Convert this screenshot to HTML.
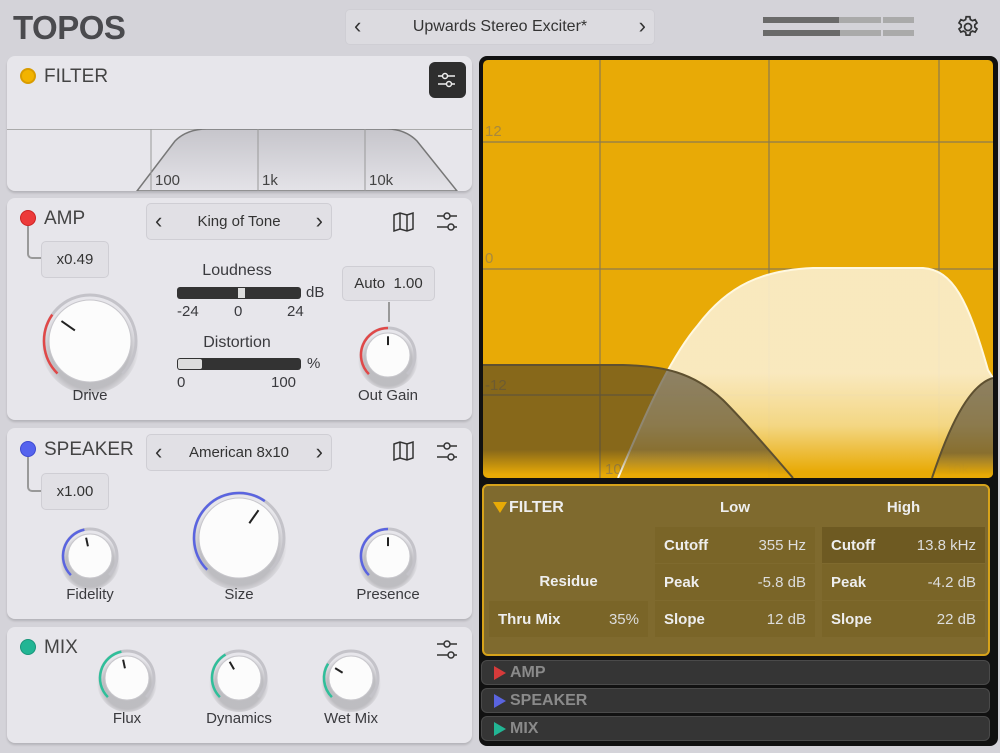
<!DOCTYPE html>
<html><head><meta charset="utf-8"><style>
*{margin:0;padding:0;box-sizing:border-box}
body{width:1000px;height:753px;background:#d4d3d9;font-family:"Liberation Sans",sans-serif;position:relative;overflow:hidden;color:#333}
.a{position:absolute}
.panel{position:absolute;left:7px;width:465px;background:#e7e6eb;border-radius:8px;box-shadow:0 2px 2px rgba(0,0,0,.15)}
.lbl{position:absolute;font-size:15px;color:#3a3a3e;text-align:center}
.box{position:absolute;background:#e1e0e5;border:1px solid #cfced4;border-radius:5px;font-size:15px;text-align:center;color:#333}
.title{position:absolute;font-size:19px;color:#444}
.dot{position:absolute;width:16px;height:16px;border-radius:50%}
.bar{position:absolute;left:481px;width:509px;height:25px;background:#353535;border:1px solid #4a4a4a;border-radius:6px;font-weight:bold;font-size:16px;color:#8a8a8a;padding:3px 0 0 28px}
.tri{position:absolute;left:12px;top:5px;width:0;height:0;border-top:7px solid transparent;border-bottom:7px solid transparent;border-left:12px solid}
.cell{position:absolute;height:36px;background:#7a6528;font-weight:bold;font-size:15px;color:#eee;padding:10px 0 0 9px}
.cell span{position:absolute;right:9px;top:10px;font-weight:normal;color:#ddd}
.ar{position:absolute;top:4px;font-size:22px;line-height:22px}
</style></head><body>
<div class="a" style="left:13px;top:9px;font-size:33px;font-weight:bold;color:#4a4a4e;letter-spacing:-0.5px">TOPOS</div>
<div class="box" style="left:345px;top:9px;width:310px;height:36px;font-size:16px;padding-top:8px;background:#dcdbe0">Upwards Stereo Exciter*<span class="ar" style="left:8px;top:5px">&lsaquo;</span><span class="ar" style="right:8px;top:5px">&rsaquo;</span></div>
<div class="a" style="left:763px;top:17px;width:76px;height:6px;background:#6a6a6a"></div><div class="a" style="left:839px;top:17px;width:42px;height:6px;background:#aaa"></div><div class="a" style="left:883px;top:17px;width:31px;height:6px;background:#aaa"></div>
<div class="a" style="left:763px;top:30px;width:77px;height:6px;background:#6a6a6a"></div><div class="a" style="left:840px;top:30px;width:41px;height:6px;background:#aaa"></div><div class="a" style="left:883px;top:30px;width:31px;height:6px;background:#aaa"></div>
<svg class="a" style="left:955px;top:14px" width="26" height="26" viewBox="0 0 24 24" fill="none" stroke="#333" stroke-width="1.6"><path d="M10.3 2.5h3.4l.5 2.6 1.9 1.1 2.5-.9 1.7 2.9-2 1.7v2.2l2 1.7-1.7 2.9-2.5-.9-1.9 1.1-.5 2.6h-3.4l-.5-2.6-1.9-1.1-2.5.9-1.7-2.9 2-1.7v-2.2l-2-1.7 1.7-2.9 2.5.9 1.9-1.1z"/><circle cx="12" cy="12" r="3.2"/></svg>

<div class="panel" style="top:56px;height:135px;overflow:hidden">
 <div class="dot" style="left:13px;top:12px;background:#f2b300;border:2px solid #d99c00"></div>
 <div class="title" style="left:37px;top:10px">FILTER</div>
 <div class="a" style="left:422px;top:6px;width:37px;height:36px;background:#2e2e2e;border-radius:6px"></div>
 <svg class="a" style="left:428px;top:12px" width="24" height="24" viewBox="0 0 24 24" stroke="#eee" stroke-width="1.5" fill="none"><path d="M3 8h17M3 16h17"/><circle cx="10" cy="8" r="2.5" fill="#2e2e2e"/><circle cx="14" cy="16" r="2.5" fill="#2e2e2e"/></svg>
 <div class="a" style="left:0;top:73px;width:465px;height:1px;background:#aaa"></div>
 <svg class="a" style="left:0;top:73px" width="465" height="62"><defs><linearGradient id="fg" x1="0" y1="0" x2="0" y2="1"><stop offset="0" stop-color="#c6c5cb"/><stop offset="1" stop-color="#e4e3e8"/></linearGradient></defs>
 <path d="M130 62 L168 12 Q180 0 200 0 L380 0 Q398 0 410 12 L450 62Z" fill="url(#fg)" stroke="#777" stroke-width="1.5"/>
 <line x1="144" y1="0" x2="144" y2="62" stroke="#999"/><line x1="251" y1="0" x2="251" y2="62" stroke="#999"/><line x1="358" y1="0" x2="358" y2="62" stroke="#999"/>
 <text x="148" y="56" font-size="15" fill="#444" font-family="Liberation Sans">100</text><text x="255" y="56" font-size="15" fill="#444" font-family="Liberation Sans">1k</text><text x="362" y="56" font-size="15" fill="#444" font-family="Liberation Sans">10k</text></svg>
</div>

<div class="panel" style="top:198px;height:222px">
 <div class="dot" style="left:13px;top:12px;background:#ec3a3a;border:1px solid #c22"></div>
 <div class="title" style="left:37px;top:10px">AMP</div>
 <div class="a" style="left:20px;top:28px;width:14px;height:33px;border-left:2px solid #999;border-bottom:2px solid #999;border-bottom-left-radius:5px"></div>
 <div class="box" style="left:34px;top:43px;width:68px;height:37px;padding-top:9px">x0.49</div>
 <div class="box" style="left:139px;top:5px;width:186px;height:37px;padding-top:9px">King of Tone<span class="ar" style="left:8px;top:6px">&lsaquo;</span><span class="ar" style="right:8px;top:6px">&rsaquo;</span></div>
 <div class="lbl" style="left:180px;top:64px;width:100px;font-size:16px">Loudness</div>
 <div class="a" style="left:170px;top:89px;width:124px;height:12px;background:#333;border-radius:3px"></div>
 <div class="a" style="left:231px;top:90px;width:7px;height:10px;background:#ddd"></div>
 <div class="lbl" style="left:299px;top:86px">dB</div>
 <div class="lbl" style="left:170px;top:105px">-24</div><div class="lbl" style="left:227px;top:105px">0</div><div class="lbl" style="left:280px;top:105px">24</div>
 <div class="lbl" style="left:180px;top:136px;width:100px;font-size:16px">Distortion</div>
 <div class="a" style="left:170px;top:160px;width:124px;height:12px;background:#333;border-radius:3px"></div>
 <div class="a" style="left:171px;top:161px;width:24px;height:10px;background:#ddd;border-radius:2px"></div>
 <div class="lbl" style="left:300px;top:157px">%</div>
 <div class="lbl" style="left:170px;top:176px">0</div><div class="lbl" style="left:264px;top:176px">100</div>
 <div class="box" style="left:335px;top:68px;width:93px;height:35px;padding-top:8px">Auto&nbsp; 1.00</div>
 <div class="a" style="left:381px;top:104px;width:2px;height:20px;background:#999"></div>
 <div class="lbl" style="left:53px;top:189px;width:60px">Drive</div>
 <div class="lbl" style="left:340px;top:189px;width:82px">Out Gain</div>
</div>

<div class="panel" style="top:428px;height:191px">
 <div class="dot" style="left:13px;top:13px;background:#5563ee;border:1px solid #3d4ad0"></div>
 <div class="title" style="left:37px;top:11px">SPEAKER</div>
 <div class="a" style="left:20px;top:29px;width:14px;height:35px;border-left:2px solid #999;border-bottom:2px solid #999;border-bottom-left-radius:5px"></div>
 <div class="box" style="left:34px;top:45px;width:68px;height:37px;padding-top:9px">x1.00</div>
 <div class="box" style="left:139px;top:6px;width:186px;height:37px;padding-top:9px">American 8x10<span class="ar" style="left:8px;top:6px">&lsaquo;</span><span class="ar" style="right:8px;top:6px">&rsaquo;</span></div>
 <div class="lbl" style="left:43px;top:158px;width:80px">Fidelity</div>
 <div class="lbl" style="left:192px;top:158px;width:80px">Size</div>
 <div class="lbl" style="left:336px;top:158px;width:90px">Presence</div>
</div>

<div class="panel" style="top:627px;height:116px">
 <div class="dot" style="left:13px;top:12px;background:#22b594;border:1px solid #18957a"></div>
 <div class="title" style="left:37px;top:10px">MIX</div>
 <div class="lbl" style="left:80px;top:83px;width:80px">Flux</div>
 <div class="lbl" style="left:186px;top:83px;width:92px">Dynamics</div>
 <div class="lbl" style="left:304px;top:83px;width:80px">Wet Mix</div>
</div>

<svg class="a" style="left:0;top:0" width="480" height="753" fill="none" stroke="#333" stroke-width="1.5">
 <g transform="translate(393,212)"><path d="M1 3l6-2 7 2 6-2v16l-6 2-7-2-6 2z M7 1v16 M14 3v16"/></g>
 <g transform="translate(393,441)"><path d="M1 3l6-2 7 2 6-2v16l-6 2-7-2-6 2z M7 1v16 M14 3v16"/></g>
 <g transform="translate(436,212)"><path d="M1 4h20M1 15h20"/><circle cx="11" cy="4" r="3" fill="#e7e6eb"/><circle cx="15" cy="15" r="3" fill="#e7e6eb"/></g>
 <g transform="translate(436,442)"><path d="M1 4h20M1 15h20"/><circle cx="11" cy="4" r="3" fill="#e7e6eb"/><circle cx="15" cy="15" r="3" fill="#e7e6eb"/></g>
 <g transform="translate(436,640)"><path d="M1 4h20M1 15h20"/><circle cx="11" cy="4" r="3" fill="#e7e6eb"/><circle cx="15" cy="15" r="3" fill="#e7e6eb"/></g>
 <defs><radialGradient id="ks" cx="0.5" cy="0.55" r="0.5"><stop offset="0.8" stop-color="rgba(0,0,0,0.18)"/><stop offset="1" stop-color="rgba(0,0,0,0)"/></radialGradient></defs>
 <g id="knobs"></g>
</svg>

<div class="a" style="left:479px;top:56px;width:519px;height:690px;background:#111;border-radius:8px"></div>
<svg class="a" style="left:483px;top:60px" width="510" height="418">
 <defs>
  <linearGradient id="wg" x1="0" y1="0" x2="0" y2="1"><stop offset="0.5" stop-color="#faecc8"/><stop offset="0.75" stop-color="#f4d98a"/><stop offset="0.97" stop-color="#e8aa06"/></linearGradient>
  <linearGradient id="dg" x1="0" y1="0" x2="0" y2="1"><stop offset="0.75" stop-color="rgba(70,60,40,0.6)"/><stop offset="0.97" stop-color="rgba(70,60,40,0)"/></linearGradient>
  <clipPath id="cp"><rect width="510" height="418" rx="5"/></clipPath>
 </defs>
 <g clip-path="url(#cp)">
 <rect width="510" height="418" fill="#e8aa06"/>
 <g stroke="#8a7a50" stroke-width="1.2"><line x1="117" y1="0" x2="117" y2="418"/><line x1="286" y1="0" x2="286" y2="418"/><line x1="456" y1="0" x2="456" y2="418"/><line x1="0" y1="82" x2="510" y2="82"/><line x1="0" y1="209" x2="510" y2="209"/><line x1="0" y1="335" x2="510" y2="335"/></g>
 <g font-size="15" fill="#a8893e" font-family="Liberation Sans"><text x="2" y="76">12</text><text x="2" y="203">0</text><text x="2" y="330">-12</text><text x="122" y="414">100</text><text x="292" y="414">1k</text><text x="462" y="414">10k</text></g>
 <path d="M135 418 C160 360 185 300 215 265 C245 225 280 210 330 208 L440 208 C470 210 485 240 505 310 L510 318 L510 418Z" fill="url(#wg)" opacity="0.95"/>
 <path d="M135 418 C160 360 185 300 215 265 C245 225 280 210 330 208 L440 208 C470 210 485 240 505 310 L510 318" stroke="#fff8e0" stroke-width="2" fill="none"/>
 <path d="M0 305 L140 305 C180 306 210 312 240 340 C265 365 290 395 310 418 L0 418Z" fill="url(#dg)"/>
 <path d="M449 418 C465 370 485 325 510 318 L510 418Z" fill="url(#dg)"/>
 <path d="M0 305 L140 305 C180 306 210 312 240 340 C265 365 290 395 310 418 M449 418 C465 370 485 325 510 318" stroke="#5e5030" stroke-width="2" fill="none"/>
 </g>
</svg>

<div class="a" style="left:482px;top:484px;width:508px;height:172px;background:#7f6a2e;border:2px solid #d7a31a;border-radius:6px"></div>
<div class="a" style="left:493px;top:502px;width:0;height:0;border-left:7px solid transparent;border-right:7px solid transparent;border-top:11px solid #e8aa06"></div>
<div class="a" style="left:509px;top:499px;font-weight:bold;font-size:16px;color:#eee">FILTER</div>
<div class="a" style="left:655px;top:499px;width:160px;text-align:center;font-weight:bold;font-size:15px;color:#eee">Low</div>
<div class="a" style="left:822px;top:499px;width:163px;text-align:center;font-weight:bold;font-size:15px;color:#eee">High</div>
<div class="a" style="left:489px;top:573px;width:159px;text-align:center;font-weight:bold;font-size:15px;color:#eee">Residue</div>
<div class="cell" style="left:489px;top:601px;width:159px">Thru Mix<span>35%</span></div>
<div class="cell" style="left:655px;top:527px;width:160px">Cutoff<span>355 Hz</span></div>
<div class="cell" style="left:655px;top:564px;width:160px">Peak<span>-5.8 dB</span></div>
<div class="cell" style="left:655px;top:601px;width:160px">Slope<span>12 dB</span></div>
<div class="cell" style="left:822px;top:527px;width:163px;background:#6e5a22">Cutoff<span>13.8 kHz</span></div>
<div class="cell" style="left:822px;top:564px;width:163px">Peak<span>-4.2 dB</span></div>
<div class="cell" style="left:822px;top:601px;width:163px">Slope<span>22 dB</span></div>

<div class="bar" style="top:660px"><div class="tri" style="border-left-color:#d63a3a"></div>AMP</div>
<div class="bar" style="top:688px"><div class="tri" style="border-left-color:#5a64e0"></div>SPEAKER</div>
<div class="bar" style="top:716px"><div class="tri" style="border-left-color:#22b594"></div>MIX</div>

<script>
var g=document.getElementById('knobs'),h='';
function pt(cx,cy,r,a){a=(a-90)*Math.PI/180;return [cx+r*Math.cos(a),cy+r*Math.sin(a)];}
function arc(cx,cy,r,a1,a2){var p=pt(cx,cy,r,a1),q=pt(cx,cy,r,a2);return 'M'+p[0].toFixed(1)+' '+p[1].toFixed(1)+' A'+r+' '+r+' 0 '+((a2-a1)>180?1:0)+' 1 '+q[0].toFixed(1)+' '+q[1].toFixed(1);}
function knob(cx,cy,r,val,col){
 var R=r+5;
 h+='<circle cx="'+cx+'" cy="'+(cy+4)+'" r="'+(r+8)+'" fill="url(#ks)" stroke="none"/>';
 h+='<path d="'+arc(cx,cy,R,-135,135)+'" stroke="#c4c3c9" stroke-width="3"/>';
 h+='<path d="'+arc(cx,cy,R,-135,val)+'" stroke="'+col+'" stroke-width="2.5"/>';
 h+='<circle cx="'+cx+'" cy="'+cy+'" r="'+r+'" fill="#fcfcfc" stroke="#c8c7cc" stroke-width="1"/>';
 var a=pt(cx,cy,r*0.45,val),b=pt(cx,cy,r*0.85,val);
 h+='<line x1="'+a[0]+'" y1="'+a[1]+'" x2="'+b[0]+'" y2="'+b[1]+'" stroke="#222" stroke-width="2"/>';
}
knob(90,341,41,-55,'#e04848');
knob(388,355,22,0,'#e04848');
knob(90,556,22,-12,'#5a64e0');
knob(239,538,40,35,'#5a64e0');
knob(388,556,22,0,'#5a64e0');
knob(127,678,22,-12,'#2fbf9a');
knob(239,678,22,-30,'#2fbf9a');
knob(351,678,22,-58,'#2fbf9a');
g.innerHTML=h;
</script>
</body></html>
